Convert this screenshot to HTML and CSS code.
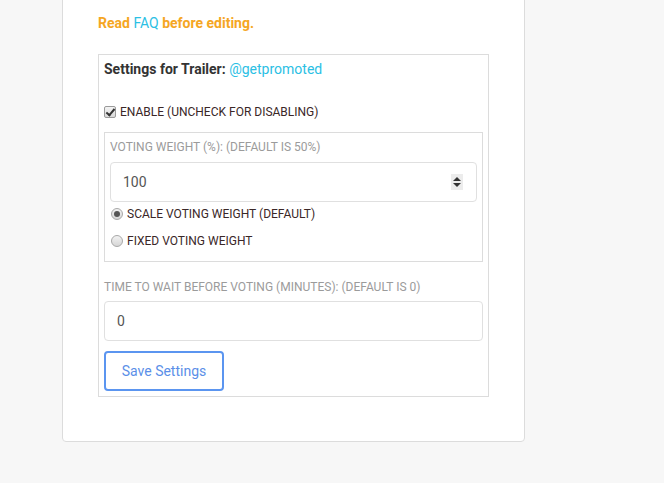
FILE: index.html
```html
<!DOCTYPE html>
<html>
<head>
<meta charset="utf-8">
<link rel="stylesheet" href="styles.css">
</head>
<body>
<div class="card">
  <p class="notice">Read <a class="link" href="#">FAQ</a> before editing.</p>
  <div class="settings">
    <div class="title">Settings for Trailer: <span class="handle">@getpromoted</span></div>
    <label class="check-row"><span class="checkbox checked"></span>ENABLE (UNCHECK FOR DISABLING)</label>
    <div class="group">
      <div class="field-label">VOTING WEIGHT (%): (DEFAULT IS 50%)</div>
      <div class="input num">
        <input class="input-text" type="text" value="100">
        <span class="spinner"><span class="up"></span><span class="down"></span></span>
      </div>
      <label class="radio-row first"><span class="radio checked"></span>SCALE VOTING WEIGHT (DEFAULT)</label>
      <label class="radio-row"><span class="radio"></span>FIXED VOTING WEIGHT</label>
    </div>
    <div class="field-label outer">TIME TO WAIT BEFORE VOTING (MINUTES): (DEFAULT IS 0)</div>
    <div class="input wide">
      <input class="input-text" type="text" value="0">
    </div>
    <button class="save">Save Settings</button>
  </div>
</div>
</body>
</html>
```

FILE: styles.css
```css
* { box-sizing: border-box; }
body {
  margin: 0;
  background: #f7f7f7;
  font-family: Roboto, "Liberation Sans", sans-serif;
}
.card {
  margin: -6px 0 0 62px;
  width: 463px;
  background: #fff;
  border: 1px solid #dcdcdc;
  border-radius: 4px;
  padding: 18px 35px 44px 35px;
}
.notice {
  margin: 0;
  font-size: 14px;
  line-height: 20px;
  font-weight: 700;
  color: #f5a623;
}
.link {
  color: #2bc0e4;
  text-decoration: none;
  font-weight: 400;
}
.settings {
  margin-top: 21px;
  width: 391px;
  border: 1px solid #dcdcdc;
  padding: 4px 5px 5px 5px;
}
.title {
  font-size: 14px;
  line-height: 20px;
  font-weight: 700;
  color: #333;
}
.handle {
  color: #2bc0e4;
  font-weight: 400;
}
.check-row {
  margin-top: 24px;
  display: flex;
  align-items: center;
  font-size: 12px;
  line-height: 18px;
  color: #3a2727;
}
.checkbox {
  width: 12px;
  height: 12px;
  border: 1px solid #9a9a9a;
  border-radius: 2px;
  background: linear-gradient(#f4f4f4, #d9d9d9);
  margin-right: 4px;
  position: relative;
  flex: none;
}
.checkbox.checked::after {
  content: "";
  position: absolute;
  left: 3px;
  top: 0px;
  width: 3px;
  height: 7px;
  border: solid #333;
  border-width: 0 2px 2px 0;
  transform: rotate(40deg);
}
.group {
  margin-top: 11px;
  border: 1px solid #dcdcdc;
  padding: 6px 5px 11px 5px;
}
.field-label {
  font-size: 12px;
  line-height: 16px;
  color: #9b9b9b;
}
.field-label.outer {
  margin-top: 17px;
}
.input {
  display: flex;
  align-items: center;
  height: 40px;
  border: 1px solid #e0e0e0;
  border-radius: 4px;
  background: #fff;
  margin-top: 7px;
  padding: 0 12px;
}
.input.wide {
  margin-top: 6px;
}
.input-text {
  flex: 1;
  border: 0;
  outline: 0;
  padding: 0;
  font-family: inherit;
  font-size: 14px;
  color: #555;
  background: transparent;
}
.spinner {
  width: 12px;
  height: 16px;
  background: #ececec;
  display: flex;
  flex-direction: column;
  align-items: center;
  justify-content: center;
  gap: 2px;
  margin-right: 1px;
}
.up {
  width: 0; height: 0;
  border-left: 4px solid transparent;
  border-right: 4px solid transparent;
  border-bottom: 4px solid #333;
}
.down {
  width: 0; height: 0;
  border-left: 4px solid transparent;
  border-right: 4px solid transparent;
  border-top: 4px solid #333;
}
.radio-row {
  display: flex;
  align-items: center;
  font-size: 12px;
  line-height: 18px;
  color: #3a2727;
  margin-top: 9px;
}
.radio-row.first {
  margin-top: 3px;
}
.radio {
  width: 12px;
  height: 12px;
  border-radius: 50%;
  border: 1px solid #a8a8a8;
  background: linear-gradient(#f2f2f2, #d6d6d6);
  margin: 0 4px 0 1px;
  position: relative;
  flex: none;
}
.radio.checked::after {
  content: "";
  position: absolute;
  left: 2px; top: 2px;
  width: 6px; height: 6px;
  border-radius: 50%;
  background: #555;
}
.save {
  margin-top: 10px;
  height: 40px;
  width: 120px;
  border: 2px solid #5b95f0;
  border-radius: 4px;
  background: #fff;
  color: #5b8fe8;
  font-family: inherit;
  font-size: 14px;
  padding: 0;
}
```
